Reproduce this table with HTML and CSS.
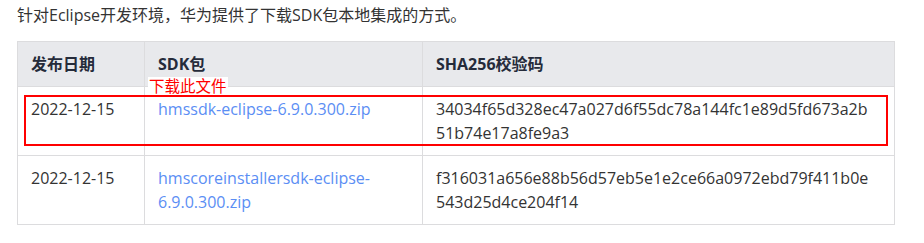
FILE: index.html
```html
<!DOCTYPE html>
<html lang="zh-CN">
<head>
<meta charset="utf-8">
<link rel="stylesheet" href="styles.css">
</head>
<body>
<p class="intro">针对Eclipse开发环境，华为提供了下载SDK包本地集成的方式。</p>
<div class="table-wrap">
  <table class="sdk-table">
    <colgroup>
      <col class="c-date">
      <col class="c-pkg">
      <col class="c-hash">
    </colgroup>
    <thead>
      <tr><th>发布日期</th><th>SDK包</th><th>SHA256校验码</th></tr>
    </thead>
    <tbody>
      <tr>
        <td>2022-12-15</td>
        <td><a href="#">hmssdk-eclipse-6.9.0.300.zip</a></td>
        <td class="hash">34034f65d328ec47a027d6f55dc78a144fc1e89d5fd673a2b51b74e17a8fe9a3</td>
      </tr>
      <tr>
        <td>2022-12-15</td>
        <td><a href="#">hmscoreinstallersdk-eclipse-6.9.0.300.zip</a></td>
        <td class="hash">f316031a656e88b56d57eb5e1e2ce66a0972ebd79f411b0e543d25d4ce204f14</td>
      </tr>
    </tbody>
  </table>
  <span class="note">下载此文件</span>
  <div class="highlight"></div>
</div>
</body>
</html>
```
FILE: styles.css
```css
html, body {
  margin: 0;
  background: #fff;
}
body {
  padding: 3px 30px 0 17px;
  font-family: "Open Sans", "Noto Sans CJK SC", sans-serif;
  font-size: 16px;
  color: #333;
}
.intro {
  margin: 0 0 14px;
  line-height: 24px;
  color: #333;
}
.table-wrap {
  position: relative;
  width: 877px;
}
.sdk-table {
  width: 877px;
  border-collapse: collapse;
  table-layout: fixed;
  line-height: 24px;
}
.c-date { width: 127px; }
.c-pkg { width: 278px; }
.c-hash { width: 472px; }
.sdk-table th,
.sdk-table td {
  border: 1px solid #dcdcde;
  padding: 10px 13px;
  text-align: left;
  vertical-align: top;
}
.sdk-table th {
  background: #e8e9ec;
  font-weight: 700;
  color: #252b3a;
}
.sdk-table td {
  color: #333;
}
.sdk-table a {
  color: #5b8ef4;
  text-decoration: none;
}
.sdk-table td.hash {
  word-break: break-all;
  padding-right: 19px;
}
.note {
  position: absolute;
  left: 131px;
  top: 36px;
  background: #fff;
  color: #f00;
  font-size: 15.5px;
  line-height: 19px;
  padding: 0 1px;
}
.highlight {
  position: absolute;
  left: 7px;
  top: 54px;
  width: 860px;
  height: 47px;
  border: 2px solid #f00;
}
```
